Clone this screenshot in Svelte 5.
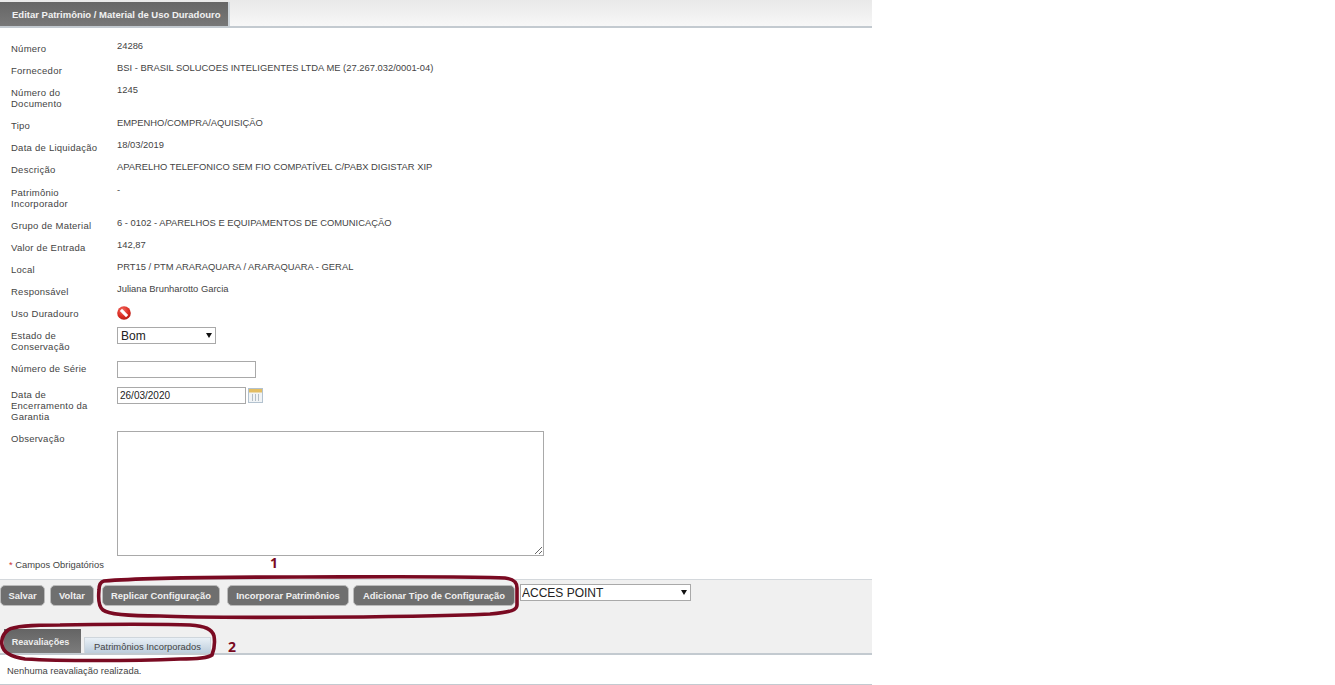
<script>
  const infoTop = [
    { label: "Número", value: "24286" },
    { label: "Fornecedor", value: "BSI - BRASIL SOLUCOES INTELIGENTES LTDA ME (27.267.032/0001-04)" },
    { label: "Número do Documento", value: "1245" },
    { label: "Tipo", value: "EMPENHO/COMPRA/AQUISIÇÃO" },
    { label: "Data de Liquidação", value: "18/03/2019" },
    { label: "Descrição", value: "APARELHO TELEFONICO SEM FIO COMPATÍVEL C/PABX DIGISTAR XIP" },
    { label: "Patrimônio Incorporador", value: "-" },
    { label: "Grupo de Material", value: "6 - 0102 - APARELHOS E EQUIPAMENTOS DE COMUNICAÇÃO" },
    { label: "Valor de Entrada", value: "142,87" },
    { label: "Local", value: "PRT15 / PTM ARARAQUARA / ARARAQUARA - GERAL" },
    { label: "Responsável", value: "Juliana Brunharotto Garcia" }
  ];
</script>

<div class="page">
  <div class="tabbar">
    <div class="maintab">Editar Patrimônio / Material de Uso Duradouro</div>
  </div>

  <div class="form">
    {#each infoTop as row}
      <div class="row">
        <div class="label">{row.label}</div>
        <div class="value">{row.value}</div>
      </div>
    {/each}

    <div class="row">
      <div class="label">Uso Duradouro</div>
      <div class="value">
        <svg class="noentry" width="14" height="14" viewBox="0 0 14 14">
          <defs>
            <radialGradient id="ball" cx="0.4" cy="0.3" r="0.8">
              <stop offset="0" stop-color="#f2685f" />
              <stop offset="0.6" stop-color="#d92a20" />
              <stop offset="1" stop-color="#a81810" />
            </radialGradient>
          </defs>
          <circle cx="7" cy="7" r="6.8" fill="url(#ball)" />
          <path d="M2.8 5 L5 2.8 L11.2 9 L9 11.2 Z" fill="#fff" />
        </svg>
      </div>
    </div>

    <div class="row">
      <div class="label">Estado de Conservação</div>
      <div class="value control">
        <div class="selwrap estado">
          <select class="sel"><option>Bom</option></select>
        </div>
      </div>
    </div>

    <div class="row">
      <div class="label">Número de Série</div>
      <div class="value control"><input class="inp serie" type="text" /></div>
    </div>

    <div class="row">
      <div class="label">Data de Encerramento da Garantia</div>
      <div class="value control dateline">
        <input class="inp date" type="text" value="26/03/2020" />
        <svg class="cal" width="15" height="15" viewBox="0 0 15 15">
          <rect x="0.5" y="0.5" width="14" height="14" fill="#f1f4f6" stroke="#b3c2cf" />
          <rect x="1" y="1" width="13" height="3.5" fill="#e3bd62" />
          <path d="M4.5 6V13M7.5 6V13M10.5 6V13" stroke="#b4bec6" fill="none" />
        </svg>
      </div>
    </div>

    <div class="row obs">
      <div class="label">Observação</div>
      <div class="value control"><textarea class="area"></textarea></div>
    </div>

    <div class="required"><span>*</span> Campos Obrigatórios</div>
  </div>

  <div class="toolbar">
    <div class="buttons">
      <button class="btn salvar">Salvar</button>
      <button class="btn voltar">Voltar</button>
      <button class="btn replicar">Replicar Configuração</button>
      <button class="btn incorporar">Incorporar Patrimônios</button>
      <button class="btn adicionar">Adicionar Tipo de Configuração</button>
      <div class="selwrap tipo">
        <select class="sel"><option>ACCES POINT</option></select>
      </div>
    </div>
    <div class="subtabs">
      <div class="subtab active">Reavaliações</div>
      <div class="subtab">Patrimônios Incorporados</div>
    </div>
  </div>

  <div class="empty">Nenhuma reavaliação realizada.</div>

  <!-- hand-drawn annotations on top of the screenshot -->
  <svg class="notes" width="1335" height="685" viewBox="0 0 1335 685">
    <path d="M104 581 C150 577 250 577 300 577 S470 576 505 578 C514 579 517 582 517 588 L517 605 C517 610 512 612 490 614 C400 618 200 618 160 616 C130 616 108 614 103 610 C99 607 98 600 99 590 C99 585 100 582 104 581 Z" />
    <path d="M8 630 C14 626 30 625 60 625 C100 624 170 624 190 625 C205 626 212 629 214 636 C215 642 214 650 212 655 C208 658 200 659 180 659 C130 661 60 661 25 659 C12 657 3 652 2 645 C1 639 3 634 8 630 Z" />
  </svg>
  <div class="mark one">1</div>
  <div class="mark two">2</div>
</div>

<style>
  :global(body) {
    margin: 0;
    background: #fff;
    font-family: "Liberation Sans", Arial, sans-serif;
  }

  .page {
    position: relative;
    width: 1335px;
    height: 685px;
    overflow: hidden;
    color: #444;
    font-size: 9.4px;
  }

  .tabbar {
    width: 872px;
    height: 26px;
    border-bottom: 2px solid #c3cad0;
    background: linear-gradient(#e9e9e9, #f7f7f7);
  }

  .maintab {
    width: 216px;
    height: 24px;
    padding-left: 12px;
    position: relative;
    top: 2px;
    background: linear-gradient(#666, #787878);
    color: #f2f2f2;
    font-weight: bold;
    line-height: 25px;
    font-size: 9.5px;
    white-space: nowrap;
    border-right: 2px solid #cfd6dc;
  }

  .form {
    width: 872px;
    height: 551px;
    padding-top: 9px;
    box-sizing: border-box;
    position: relative;
  }

  .row {
    display: flex;
    align-items: flex-start;
    padding: 6px 0 5.1px;
  }

  .label {
    width: 92px;
    margin-left: 11px;
    margin-right: 14px;
    line-height: 11px;
    font-size: 9.5px;
    letter-spacing: 0.25px;
  }

  .value {
    margin-top: -3px;
    line-height: 11px;
    min-height: 11px;
  }

  .value.control {
    margin-top: -2px;
  }

  .noentry {
    display: block;
    margin-top: 1px;
    margin-bottom: -2px;
  }

  .selwrap {
    position: relative;
    height: 17px;
  }

  .selwrap::after {
    content: "";
    position: absolute;
    right: 4px;
    top: 6px;
    border-left: 3px solid transparent;
    border-right: 3px solid transparent;
    border-top: 5px solid #111;
    pointer-events: none;
  }

  .sel {
    display: block;
    width: 100%;
    height: 100%;
    box-sizing: border-box;
    padding: 0 0 0 3px;
    border: 1px solid #a9a9a9;
    border-radius: 0;
    background: #fff;
    appearance: none;
    color: #222;
    font-family: "Liberation Sans", Arial, sans-serif;
    font-size: 12px;
  }

  .estado {
    width: 99px;
    margin-top: -1px;
  }

  .inp {
    display: block;
    height: 17px;
    box-sizing: border-box;
    padding: 0 2px;
    border: 1px solid #a9a9a9;
    color: #222;
    font-family: "Liberation Sans", Arial, sans-serif;
    font-size: 10px;
  }

  .serie {
    width: 139px;
  }

  .date {
    width: 129px;
  }

  .dateline {
    display: flex;
    gap: 2px;
  }

  .cal {
    margin-top: 1px;
  }

  .obs {
    padding-bottom: 0;
  }

  .area {
    display: block;
    width: 427px;
    height: 125px;
    box-sizing: border-box;
    margin: 0;
    border: 1px solid #a9a9a9;
  }

  .required {
    margin: 3px 0 0 9px;
    line-height: 11px;
  }

  .required span {
    color: #c33;
  }

  .toolbar {
    width: 872px;
    height: 76px;
    box-sizing: border-box;
    background: #f0f0f0;
    border-top: 1px solid #d4d8dc;
    border-bottom: 2px solid #c3cad0;
    display: flex;
    flex-direction: column;
    justify-content: space-between;
  }

  .buttons {
    display: flex;
    align-items: flex-start;
    margin-top: 5px;
  }

  .btn {
    height: 21px;
    box-sizing: border-box;
    padding: 0;
    border: 1px solid #bbb;
    border-radius: 5px;
    background: #6f6f6f;
    color: #f0f0f0;
    font-family: "Liberation Sans", Arial, sans-serif;
    font-size: 9.4px;
    font-weight: bold;
  }

  .salvar {
    width: 45px;
    margin-right: 5px;
  }

  .voltar {
    width: 44px;
    margin-right: 8px;
  }

  .replicar {
    width: 118px;
    margin-right: 7px;
  }

  .incorporar {
    width: 122px;
    margin-right: 4px;
  }

  .adicionar {
    width: 162px;
    margin-right: 5px;
  }

  .tipo {
    width: 171px;
    margin-top: -1px;
  }

  .tipo .sel {
    padding-left: 1px;
  }

  .subtabs {
    display: flex;
    align-items: flex-end;
    padding-left: 4px;
    gap: 3px;
  }

  .subtab {
    width: 125px;
    height: 15px;
    line-height: 18px;
    text-align: center;
    background: linear-gradient(#e9f0f6, #bccddc);
    border: 1px solid #cfd6dc;
    border-bottom: 0;
    color: #444;
  }

  .subtab.active {
    width: 73px;
    height: 24px;
    padding-right: 4px;
    line-height: 26px;
    background: linear-gradient(#646464, #7c7c7c);
    border: 0;
    color: #eee;
    font-size: 9.1px;
    font-weight: bold;
  }

  .empty {
    width: 872px;
    height: 30px;
    box-sizing: border-box;
    padding: 10px 0 0 7px;
    line-height: 11px;
    border-bottom: 1px solid #c3cad0;
  }

  .notes {
    position: absolute;
    top: 0;
    left: 0;
    pointer-events: none;
  }

  .notes path {
    fill: none;
    stroke: #7a0a22;
    stroke-width: 3.6;
  }

  .mark {
    position: absolute;
    color: #7a0a22;
    font-family: "Open Sans", sans-serif;
    font-weight: bold;
    font-size: 14px;
    line-height: 15px;
  }

  .one {
    left: 270px;
    top: 555px;
  }

  .two {
    left: 228px;
    top: 639px;
  }
</style>
